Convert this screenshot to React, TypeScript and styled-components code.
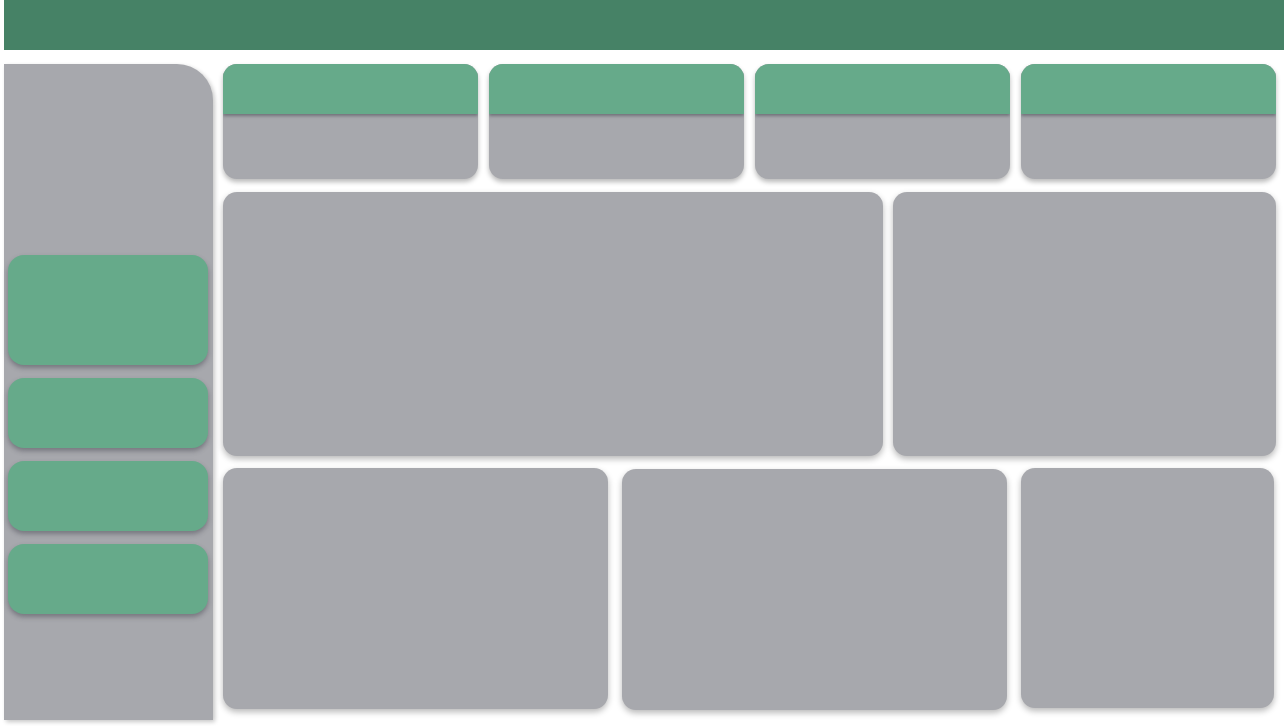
import React from "react";
import styled, { createGlobalStyle } from "styled-components";

const Global = createGlobalStyle`
  html, body { margin: 0; padding: 0; background: #ffffff; font-family: "Liberation Sans", Arial, sans-serif; }
  * { box-sizing: border-box; }
`;

const GREY = "#a7a8ad";
const GREEN = "#66aa8a";

const Page = styled.div`
  width: 1284px;
  height: 728px;
  padding-left: 4px;
  display: flex;
  flex-direction: column;
  gap: 14px;
  overflow: hidden;
`;

const Header = styled.header`
  height: 50px;
  background: #468266;
  flex-shrink: 0;
`;

const Body = styled.div`
  display: flex;
  gap: 10px;
  align-items: flex-start;
`;

const Sidebar = styled.aside`
  width: 209px;
  height: 656px;
  background: ${GREY};
  border-top-right-radius: 36px;
  box-shadow: 2px 2px 4px rgba(0, 0, 0, 0.22);
  padding: 191px 5px 0 4px;
  display: flex;
  flex-direction: column;
  gap: 13px;
`;

const NavButton = styled.div<{ $h: number }>`
  height: ${(p) => p.$h}px;
  background: ${GREEN};
  border-radius: 16px;
  box-shadow: 0 3px 5px rgba(60, 60, 70, 0.45);
`;

const Main = styled.main`
  width: 1053px;
  display: flex;
  flex-direction: column;
  gap: 13px;
`;

const StatRow = styled.div`
  display: flex;
  gap: 11px;
`;

const StatCard = styled.div`
  width: 255px;
  height: 115px;
  background: ${GREY};
  border-radius: 14px;
  overflow: hidden;
  box-shadow: 0 3px 5px rgba(0, 0, 0, 0.28);
  display: flex;
  flex-direction: column;
`;

const StatHead = styled.div`
  height: 50px;
  background: ${GREEN};
  box-shadow: 0 2px 3px rgba(70, 70, 80, 0.55);
  position: relative;
  z-index: 1;
`;

const MidRow = styled.div`
  display: flex;
  gap: 10px;
`;

const Panel = styled.div<{ $w: number; $h: number; $mt?: number }>`
  width: ${(p) => p.$w}px;
  height: ${(p) => p.$h}px;
  margin-top: ${(p) => p.$mt ?? 0}px;
  background: ${GREY};
  border-radius: 14px;
  box-shadow: 0 3px 6px rgba(0, 0, 0, 0.28);
  flex-shrink: 0;
`;

const BottomRow = styled.div`
  display: flex;
  gap: 14px;
  margin-top: -1px;
  align-items: flex-start;
`;

export default function App() {
  return (
    <>
      <Global />
      <Page>
        <Header />
        <Body>
          <Sidebar>
            <NavButton $h={110} />
            <NavButton $h={70} />
            <NavButton $h={70} />
            <NavButton $h={70} />
          </Sidebar>
          <Main>
            <StatRow>
              {[0, 1, 2, 3].map((i) => (
                <StatCard key={i}>
                  <StatHead />
                </StatCard>
              ))}
            </StatRow>
            <MidRow>
              <Panel $w={660} $h={264} />
              <Panel $w={383} $h={264} />
            </MidRow>
            <BottomRow>
              <Panel $w={385} $h={241} />
              <Panel $w={385} $h={241} $mt={1} />
              <Panel $w={253} $h={240} />
            </BottomRow>
          </Main>
        </Body>
      </Page>
    </>
  );
}
